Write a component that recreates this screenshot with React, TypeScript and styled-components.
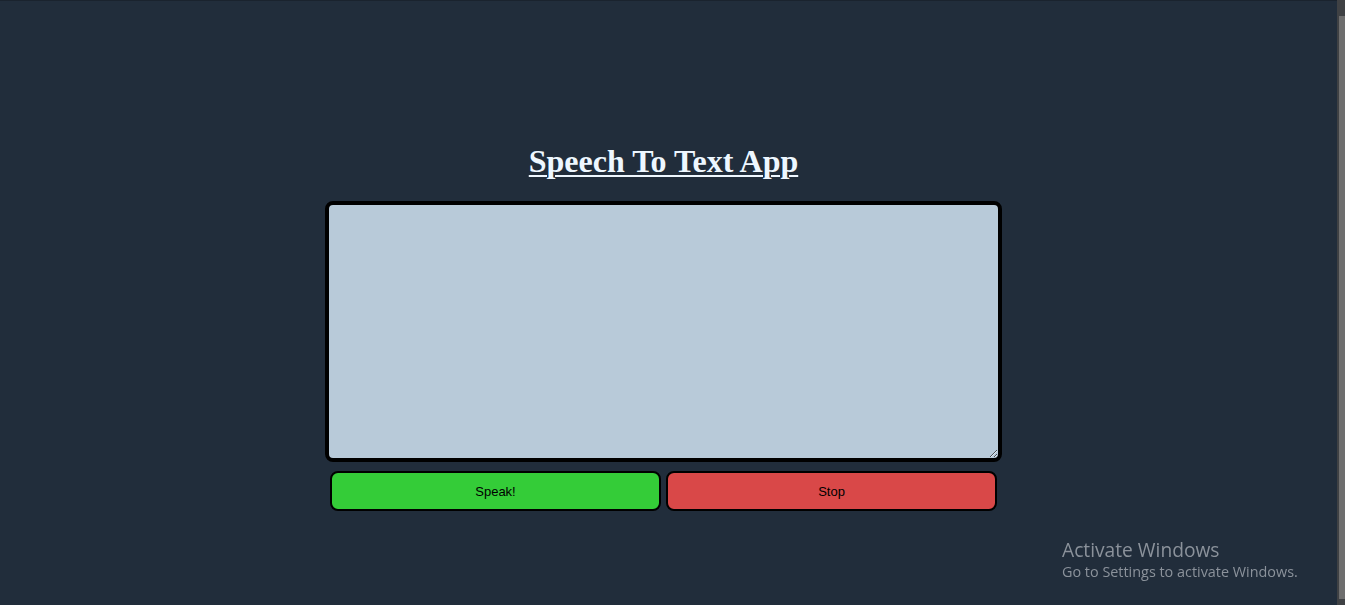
import React from "react";
import styled, { createGlobalStyle } from "styled-components";

const Global = createGlobalStyle`
  html, body { margin: 0; padding: 0; height: 100%; overflow: hidden; }
  body { background: #212d3b; font-family: "Liberation Serif", serif; }
`;

const Page = styled.div`
  box-sizing: border-box;
  width: 1337px;
  height: 605px;
  border-top: 1px solid #1a232e;
  display: flex;
  flex-direction: column;
  align-items: center;
  padding-top: 142px;
  padding-right: 10px;
`;

const Title = styled.h1`
  margin: 0;
  font-family: "Liberation Serif", serif;
  font-weight: bold;
  font-size: 32px;
  line-height: 37px;
  color: #eef7ff;
  text-decoration: underline;
  text-decoration-thickness: 2px;
  text-underline-offset: 3px;
`;

const Area = styled.textarea`
  box-sizing: border-box;
  margin-top: 21px;
  width: 677px;
  height: 261px;
  background: #b8cad9;
  border: 4px solid #000;
  border-radius: 8px;
  outline: none;
  padding: 4px;
  font-family: "Liberation Sans", sans-serif;
  font-size: 14px;
`;

const Row = styled.div`
  display: flex;
  gap: 5px;
  margin-top: 9px;
`;

const Btn = styled.button<{ $bg: string }>`
  box-sizing: border-box;
  width: 331px;
  height: 40px;
  background: ${(p) => p.$bg};
  border: 2px solid #000;
  border-radius: 8px;
  font-family: "Liberation Sans", Arial, sans-serif;
  font-size: 13px;
  color: #000;
  cursor: pointer;
`;

const Watermark = styled.div`
  position: fixed;
  left: 1062px;
  top: 538px;
  font-family: "Open Sans", "Noto Sans", sans-serif;
  color: #8b929b;
`;

const WTitle = styled.div`
  font-size: 19.2px;
  line-height: 23px;
`;

const WSub = styled.div`
  font-size: 14.4px;
  line-height: 20px;
  margin-top: 1px;
`;

const Scrollbar = styled.div`
  position: fixed;
  top: 0;
  right: 0;
  width: 8px;
  height: 605px;
  background: #3f4144;
`;

const Thumb = styled.div`
  position: absolute;
  left: 2px;
  right: 0;
  top: 16px;
  bottom: 6px;
  background: #6e6e6e;
`;

export default function App() {
  return (
    <>
      <Global />
      <Page>
        <Title>Speech To Text App</Title>
        <Area />
        <Row>
          <Btn $bg="#34cc38">Speak!</Btn>
          <Btn $bg="#d94848">Stop</Btn>
        </Row>
      </Page>
      <Watermark>
        <WTitle>Activate Windows</WTitle>
        <WSub>Go to Settings to activate Windows.</WSub>
      </Watermark>
      <Scrollbar>
        <Thumb />
      </Scrollbar>
    </>
  );
}
